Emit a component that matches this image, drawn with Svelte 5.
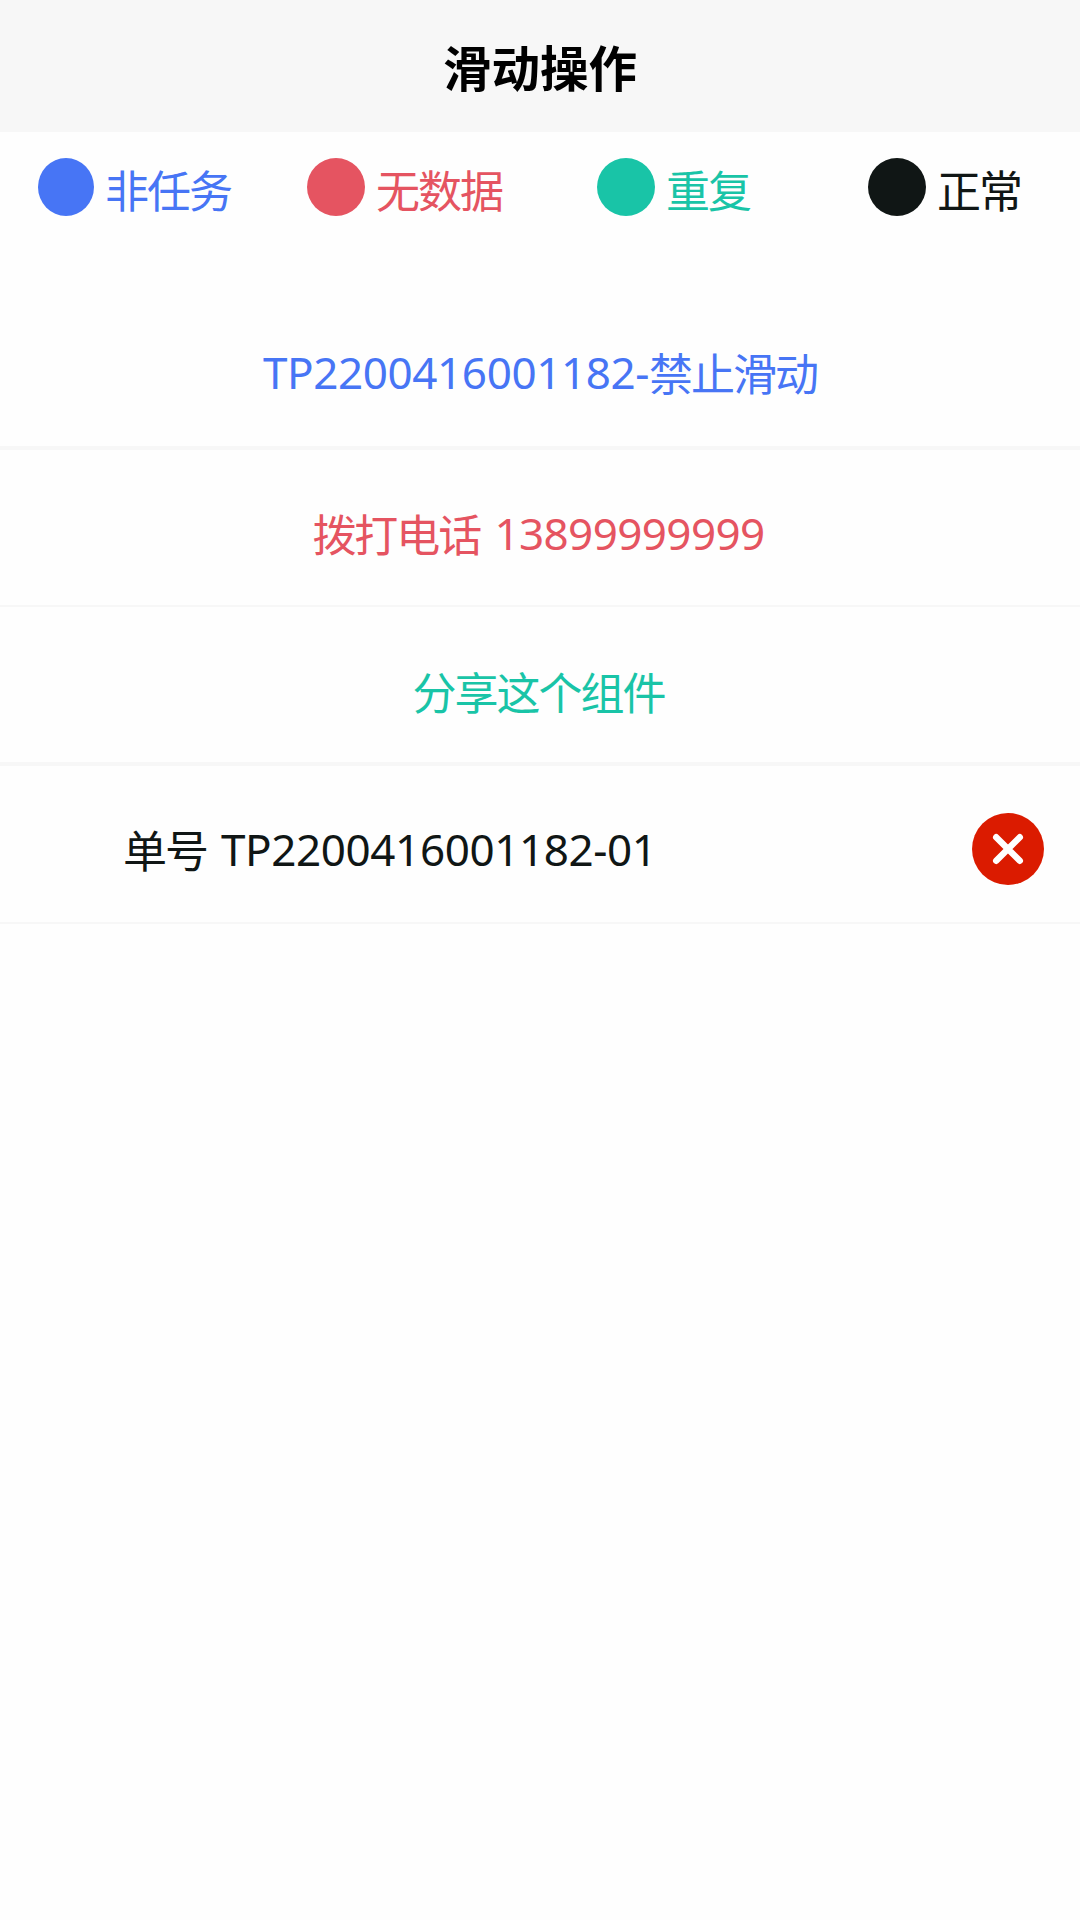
<script>
  const legend = [
    { label: '非任务', tone: 'blue' },
    { label: '无数据', tone: 'red' },
    { label: '重复', tone: 'green' },
    { label: '正常', tone: 'black' },
  ];
</script>

<main>
  <header><h1>滑动操作</h1></header>

  <ul class="legend">
    {#each legend as item}
      <li class={item.tone}><i class="dot"></i><span class="label">{item.label}</span></li>
    {/each}
  </ul>

  <section class="list">
    <div class="row locked blue"><span class="latin">TP2200416001182-</span><span class="han">禁止滑动</span></div>
    <div class="row phone red"><span class="han">拨打电话</span><span class="latin digits">13899999999</span></div>
    <div class="row share green"><span class="han">分享这个组件</span></div>
    <div class="row order black">
      <div class="number"><span class="han">单号</span><span class="latin code">TP2200416001182-01</span></div>
      <button aria-label="删除">
        <svg viewBox="0 0 72 72" width="72" height="72">
          <circle cx="36" cy="36" r="36" fill="#db1b00" />
          <path d="M24.2 24.2 47.8 47.8M47.8 24.2 24.2 47.8" stroke="#fff" stroke-width="6.4" stroke-linecap="round" />
        </svg>
      </button>
    </div>
  </section>
</main>

<style>
  :global(body) { margin: 0; background: #fefefe; }
  main {
    min-height: 1920px;
    background: #fefefe;
    font-family: "Noto Sans", "Noto Sans CJK SC", sans-serif;
    font-size: 44px;
    line-height: 60px;
  }
  header {
    height: 132px;
    box-sizing: border-box;
    padding-top: 3px;
    background: #f7f7f7;
    display: flex;
    align-items: center;
    justify-content: center;
  }
  h1 { margin: 0; font-size: 48.5px; font-weight: 700; color: #000; line-height: 70px; }
  .legend {
    list-style: none;
    margin: 0;
    padding: 0 0 0 38px;
    height: 160px;
    box-sizing: border-box;
    display: grid;
    grid-template-columns: 269px 290px 271px 1fr;
    align-items: start;
  }
  .legend li { display: flex; align-items: center; height: 58px; margin-top: 26px; }
  .dot { width: 58px; height: 58px; border-radius: 50%; background: currentColor; margin-right: 11px; }
  .legend li:first-child .dot { width: 56px; }
  .label, .han { font-family: "Noto Sans CJK SC", sans-serif; letter-spacing: -2px; white-space: nowrap; }
  .label { padding-top: 3px; }
  .blue { color: #4775f5; }
  .red { color: #e55461; }
  .green { color: #19c4a7; }
  .black { color: #101615; }
  .row {
    height: 158px;
    box-sizing: border-box;
    border-bottom: 2px solid #f7f7f7;
    display: flex;
    align-items: center;
    justify-content: center;
    white-space: nowrap;
  }
  .locked { border-bottom-width: 4px; padding-top: 6px; }
  .phone { height: 157px; padding: 11px 3px 0 0; }
  .share { height: 159px; border-bottom-width: 4px; padding: 12px 3px 0 0; }
  .latin { letter-spacing: -0.4px; }
  .phone .latin { letter-spacing: -0.6px; }
  .digits, .code { margin-left: 14px; }
  .order { justify-content: space-between; padding: 10px 36px 0 123px; }
  .number { display: flex; align-items: center; }
  button { border: 0; padding: 0; background: none; display: flex; }
</style>
